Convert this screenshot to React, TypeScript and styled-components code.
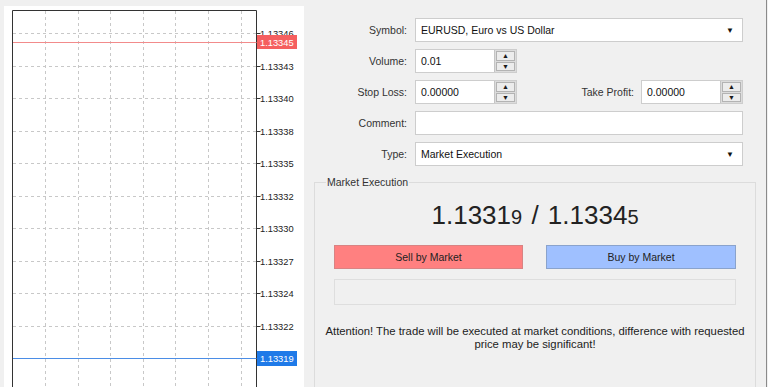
import * as React from 'react';
import styled, { createGlobalStyle } from 'styled-components';

const GRID_TOP = 27;
const GRID_STEP = 32.5;
const COL_LEFT = 41;
const COL_STEP = 32.6;
const AXIS_X = 252.5;

const LEVELS = [
  '1.13346', '1.13343', '1.13340', '1.13338', '1.13335',
  '1.13332', '1.13330', '1.13327', '1.13324', '1.13322',
];

const Global = createGlobalStyle`
  body {
    margin: 0;
    background: #f0f0f0;
    font-family: "Liberation Sans", Arial, sans-serif;
  }
`;

const Chart: React.FC = () => {
  const rows = Array.from({ length: 11 }, (_, i) => Math.round(GRID_TOP + i * GRID_STEP) + 0.5);
  const cols = Array.from({ length: 7 }, (_, i) => Math.round(COL_LEFT + i * COL_STEP) + 0.5);
  return (
    <svg width="300" height="381" viewBox="0 0 300 381">
      {rows.map((y) => (
        <line key={'h' + y} x1="9" x2={AXIS_X} y1={y} y2={y} stroke="#c8c8c8" strokeDasharray="3 3" />
      ))}
      {cols.map((x) => (
        <line key={'v' + x} x1={x} x2={x} y1="5" y2="381" stroke="#c8c8c8" strokeDasharray="3 3" />
      ))}
      <path d={`M8.5 381 V4.5 H${AXIS_X} V381`} fill="none" stroke="#333" />
      {rows.slice(0, 10).map((y, i) => (
        <g key={'t' + y}>
          <line x1={AXIS_X} x2={AXIS_X + 4} y1={y} y2={y} stroke="#333" />
          <text x="256" y={y + 3.5} fontSize="9.3" fill="#222" fontFamily="Liberation Sans, Arial, sans-serif">
            {LEVELS[i]}
          </text>
        </g>
      ))}

      <line x1="9" x2={AXIS_X} y1="36.5" y2="36.5" stroke="#f28b8b" />
      <rect x="253" y="29" width="40" height="14" fill="#f55f5f" />
      <text x="256" y="39.5" fontSize="9.3" fill="#fff" fontFamily="Liberation Sans, Arial, sans-serif">1.13345</text>

      <line x1="9" x2={AXIS_X} y1="352.5" y2="352.5" stroke="#4b8de6" />
      <rect x="253" y="345" width="40" height="15" fill="#1f7ae8" />
      <text x="256" y="356" fontSize="9.3" fill="#fff" fontFamily="Liberation Sans, Arial, sans-serif">1.13319</text>
    </svg>
  );
};

const Spin: React.FC = () => (
  <Spinner>
    <SpinButton>▲</SpinButton>
    <SpinButton>▼</SpinButton>
  </Spinner>
);

const App: React.FC = () => (
  <Page>
    <Global />
    <ChartPanel>
      <Chart />
    </ChartPanel>
    <OrderPanel>
      <Form>
        <Label>Symbol:</Label>
        <Field>
          <Value>EURUSD, Euro vs US Dollar</Value>
          <Arrow>▼</Arrow>
        </Field>

        <Label>Volume:</Label>
        <Field $w={102}>
          <Value>0.01</Value>
          <Spin />
        </Field>

        <Label>Stop Loss:</Label>
        <Pair>
          <Field $w={102}>
            <Value>0.00000</Value>
            <Spin />
          </Field>
          <Label>Take Profit:</Label>
          <Field $w={102}>
            <Value>0.00000</Value>
            <Spin />
          </Field>
        </Pair>

        <Label>Comment:</Label>
        <Field />

        <Label>Type:</Label>
        <Field>
          <Value>Market Execution</Value>
          <Arrow>▼</Arrow>
        </Field>
      </Form>

      <Group>
        <Legend>Market Execution</Legend>
        <Price>
          1.1331<Small>9</Small> <Slash>/</Slash> 1.1334<Small>5</Small>
        </Price>
        <Buttons>
          <TradeButton $kind="sell">Sell by Market</TradeButton>
          <TradeButton $kind="buy">Buy by Market</TradeButton>
        </Buttons>
        <Status />
        <Notice>
          Attention! The trade will be executed at market conditions, difference with requested
          <br />
          price may be significant!
        </Notice>
      </Group>
    </OrderPanel>
  </Page>
);

const Page = styled.div`
  display: flex;
  height: 387px;
  width: 768px;
  overflow: hidden;
  background: #f0f0f0;
`;

const ChartPanel = styled.div`
  width: 300px;
  margin: 6px 0 0 4px;
  background: #fff;
  svg {
    display: block;
  }
`;

const OrderPanel = styled.div`
  flex: 1;
  display: flex;
  flex-direction: column;
  margin-right: 1px;
  padding: 18px 10px 0 10px;
  border-right: 1px solid #8a8a8a;
  font-size: 10.5px;
  color: #222;
`;

const Form = styled.div`
  display: grid;
  grid-template-columns: 93px 328px;
  grid-auto-rows: 24px;
  column-gap: 8px;
  row-gap: 7px;
  align-items: center;
`;

const Label = styled.div`
  text-align: right;
  color: #333;
  white-space: nowrap;
`;

const Field = styled.div<{ $w?: number }>`
  box-sizing: border-box;
  height: 24px;
  width: ${(p) => (p.$w ? `${p.$w}px` : '100%')};
  display: flex;
  align-items: center;
  background: #fff;
  border: 1px solid #cdcdcd;
  padding-left: 5px;
  color: #111;
`;

const Value = styled.span`
  flex: 1;
  white-space: nowrap;
`;

const Arrow = styled.span`
  font-size: 8px;
  margin-right: 8px;
  color: #111;
`;

const Pair = styled.div`
  display: flex;
  align-items: center;
  ${Label} {
    margin-left: auto;
    margin-right: 7px;
  }
`;

const Spinner = styled.div`
  box-sizing: border-box;
  width: 22px;
  height: 100%;
  display: flex;
  flex-direction: column;
  padding: 1px;
  gap: 1px;
  background: #dcdcdc;
  border-left: 1px solid #c4c4c4;
`;

const SpinButton = styled.div`
  flex: 1;
  display: flex;
  align-items: center;
  justify-content: center;
  background: #ececec;
  border: 1px solid #b3b3b3;
  font-size: 7px;
  color: #1a1a1a;
  line-height: 1;
`;

const Group = styled.fieldset`
  margin: 10px 0 0 0;
  padding: 0 19px;
  height: 280px;
  flex-shrink: 0;
  border: 1px solid #dcdcdc;
  display: flex;
  flex-direction: column;
`;

const Legend = styled.legend`
  margin-left: -8px;
  padding: 0 1px;
  color: #333;
  font-size: 10.5px;
`;

const Price = styled.div`
  margin-top: 12px;
  text-align: center;
  font-size: 26px;
  line-height: 30px;
  color: #222;
  white-space: nowrap;
`;

const Small = styled.span`
  font-size: 20px;
`;

const Slash = styled.span`
  margin: 0 2px;
`;

const Buttons = styled.div`
  margin-top: 13px;
  display: grid;
  grid-template-columns: 189px 190px;
  justify-content: space-between;
`;

const TradeButton = styled.div<{ $kind: 'sell' | 'buy' }>`
  box-sizing: border-box;
  height: 24px;
  display: flex;
  align-items: center;
  justify-content: center;
  background: ${(p) => (p.$kind === 'sell' ? '#ff8080' : '#9fc0ff')};
  border: 1px solid ${(p) => (p.$kind === 'sell' ? '#d98383' : '#8aa3cc')};
  color: #222;
`;

const Status = styled.div`
  margin-top: 10px;
  height: 24px;
  border: 1px solid #dedede;
  background: #f0f0f0;
`;

const Notice = styled.div`
  margin: 20px -14px 0;
  text-align: center;
  font-size: 11.3px;
  line-height: 13px;
  color: #222;
  white-space: nowrap;
`;

export default App;
